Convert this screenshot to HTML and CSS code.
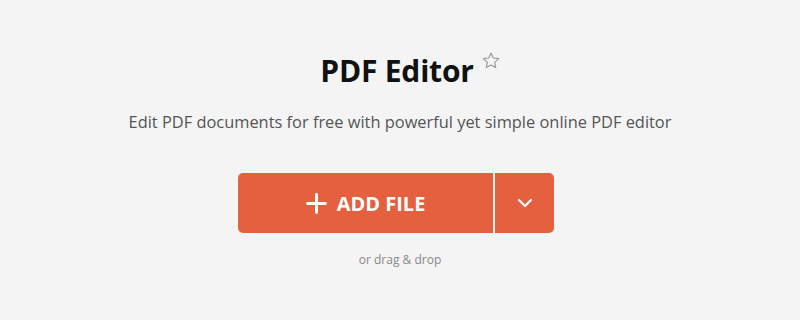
FILE: index.html
```html
<!DOCTYPE html>
<html lang="en">
<head>
    <meta charset="UTF-8">
    <meta name="viewport" content="width=device-width, initial-scale=1.0">
    <title>PDF Editor</title>
    <link rel="stylesheet" href="styles.css">
</head>
<body>
    <div class="tool">
        <div class="title-row">
            <h1>PDF Editor</h1>
            <svg class="star" width="18" height="17" viewBox="0 0 24 23">
                <path d="M12 1.5l3.1 6.6 7.2.9-5.3 5 1.4 7.1L12 17.6l-6.4 3.5 1.4-7.1-5.3-5 7.2-.9z" fill="none" stroke="#9a9a9a" stroke-width="1.6" stroke-linejoin="round"/>
            </svg>
        </div>
        <p class="subtitle">Edit PDF documents for free with powerful yet simple online PDF editor</p>
        <div class="upload">
            <button class="btn-add">
                <svg width="21" height="21" viewBox="0 0 20 20">
                    <path d="M10 1.5v17M1.5 10h17" stroke="white" stroke-width="2.8" stroke-linecap="round"/>
                </svg>
                ADD FILE
            </button>
            <button class="btn-more">
                <svg width="16" height="10" viewBox="0 0 16 10">
                    <path d="M2 2l6 6 6-6" fill="none" stroke="white" stroke-width="2.2" stroke-linecap="round" stroke-linejoin="round"/>
                </svg>
            </button>
        </div>
        <p class="drop">or drag &amp; drop</p>
    </div>
</body>
</html>
```

FILE: styles.css
```css
body {
    font-family: "Open Sans", Arial, sans-serif;
    background: #f4f4f4;
    margin: 0;
    height: 320px;
    color: #111;
}
.tool {
    display: flex;
    flex-direction: column;
    align-items: center;
    padding-top: 51px;
}
.title-row {
    display: flex;
    align-items: flex-start;
    margin-left: 20px;
}
h1 {
    font-size: 30px;
    font-weight: 700;
    margin: 0;
    line-height: 40px;
    letter-spacing: -0.2px;
}
.star {
    margin-left: 8px;
    margin-top: 1px;
}
.subtitle {
    font-size: 16.4px;
    color: #555;
    margin: 19px 0 0;
    line-height: 24px;
}
.upload {
    display: flex;
    margin-top: 39px;
    margin-left: -8px;
}
.upload button {
    background: #e5603f;
    border: none;
    color: white;
    height: 60px;
    cursor: pointer;
    display: flex;
    align-items: center;
    justify-content: center;
}
.btn-add {
    width: 255px;
    border-radius: 5px 0 0 5px;
    font-family: "Open Sans", Arial, sans-serif;
    font-size: 20px;
    font-weight: 700;
    gap: 10px;
    padding-right: 6px;
}
.btn-more {
    width: 59px;
    margin-left: 2px;
    border-radius: 0 5px 5px 0;
}
.drop {
    font-size: 12px;
    color: #888;
    margin: 18px 0 0;
}
```
